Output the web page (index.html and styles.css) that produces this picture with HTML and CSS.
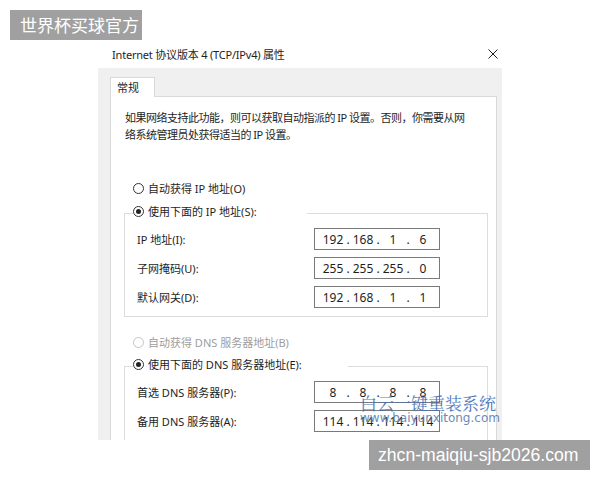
FILE: index.html
```html
<!DOCTYPE html>
<html lang="zh-CN">
<head>
    <meta charset="UTF-8">
    <meta name="viewport" content="width=device-width, initial-scale=1.0">
    <title>Internet 协议版本 4 (TCP/IPv4) 属性</title>
    <link rel="stylesheet" href="styles.css">
</head>
<body>
    <div class="tag tag-top">世界杯买球官方</div>

    <div class="dialog">
        <div class="titlebar">
            <span class="title">Internet 协议版本 4 (TCP/IPv4) 属性</span>
            <svg class="close" width="10" height="10" viewBox="0 0 10 10">
                <path d="M0.5 0.5 L9.5 9.5 M9.5 0.5 L0.5 9.5" stroke="#222" stroke-width="1" fill="none"/>
            </svg>
        </div>

        <div class="frame">
            <div class="tabs">
                <div class="tab">常规</div>
            </div>

            <div class="panel">
                <p class="intro">如果网络支持此功能，则可以获取自动指派的 IP 设置。否则，你需要从网<br>络系统管理员处获得适当的 IP 设置。</p>

                <div class="option"><span class="radio"></span>自动获得 IP 地址(O)</div>

                <div class="group">
                    <div class="option group-head ip-head"><span class="radio checked"></span>使用下面的 IP 地址(S):</div>
                    <div class="fields">
                        <label>IP 地址(I):</label>
                        <div class="ipbox"><span>192</span><i>.</i><span>168</span><i>.</i><span>1</span><i>.</i><span>6</span></div>
                        <label>子网掩码(U):</label>
                        <div class="ipbox"><span>255</span><i>.</i><span>255</span><i>.</i><span>255</span><i>.</i><span>0</span></div>
                        <label>默认网关(D):</label>
                        <div class="ipbox"><span>192</span><i>.</i><span>168</span><i>.</i><span>1</span><i>.</i><span>1</span></div>
                    </div>
                </div>

                <div class="option option-dns disabled"><span class="radio"></span>自动获得 DNS 服务器地址(B)</div>

                <div class="group group-dns">
                    <div class="option group-head dns-head"><span class="radio checked"></span>使用下面的 DNS 服务器地址(E):</div>
                    <div class="fields">
                        <label>首选 DNS 服务器(P):</label>
                        <div class="ipbox"><span>8</span><i>.</i><span>8</span><i>.</i><span>8</span><i>.</i><span>8</span></div>
                        <label>备用 DNS 服务器(A):</label>
                        <div class="ipbox"><span>114</span><i>.</i><span>114</span><i>.</i><span>114</span><i>.</i><span>114</span></div>
                    </div>
                </div>
            </div>

            <!-- site watermark over the screenshot -->
            <div class="mark">
                <div class="mark-cn">白云一键重装系统</div>
                <div class="mark-url">www.baiyunxitong.com</div>
            </div>
        </div>
    </div>

    <div class="tag tag-bottom">zhcn-maiqiu-sjb2026.com</div>
</body>
</html>
```
FILE: styles.css
```css
body {
    margin: 0;
    background-color: #fff;
    font-family: "Noto Sans", "Noto Sans CJK SC", sans-serif;
    font-size: 11px;
    color: #1e1e1e;
    overflow: hidden;
}

/* grey labels on the picture */
.tag {
    height: 30px;
    line-height: 30px;
    background-color: #a0a0a0;
    color: #fff;
    white-space: nowrap;
    box-sizing: border-box;
}
.tag-top {
    margin: 10px 0 0 10px;
    width: 132px;
    padding-left: 10px;
    font-family: "Noto Sans CJK SC", sans-serif;
    font-size: 17px;
}
.tag-bottom {
    margin-left: 369px;
    width: 221px;
    padding-left: 9px;
    font-family: "Liberation Sans", sans-serif;
    font-size: 17.6px;
}

/* the dialog screenshot */
.dialog {
    margin-left: 98px;
    width: 404px;
    height: 400px;
    overflow: hidden;
}
.titlebar {
    height: 28px;
    display: flex;
    justify-content: space-between;
    align-items: center;
    padding: 0 4px 0 14px;
    background-color: #fff;
}
.title {
    letter-spacing: -0.2px;
}
.close {
    display: block;
}
.frame {
    position: relative;
    height: 372px;
    background-color: #f0f0f0;
    padding: 9px 5px 0 12px;
}
.tabs {
    display: flex;
}
.tab {
    position: relative;
    z-index: 1;
    width: 45px;
    height: 20px;
    line-height: 19px;
    box-sizing: border-box;
    padding-left: 6px;
    margin-bottom: -1px;
    border: 1px solid #d9d9d9;
    border-bottom: none;
    background-color: #fff;
}
.panel {
    height: 360px;
    border: 1px solid #d9d9d9;
    background-color: #fff;
    padding: 12px 0 0 13px;
}
.intro {
    margin: 0;
    padding-left: 1px;
    line-height: 17px;
    letter-spacing: -0.5px;
    white-space: nowrap;
}

/* radio rows */
.option {
    display: flex;
    align-items: center;
    height: 20px;
    margin-left: 9px;
    white-space: nowrap;
}
.intro + .option {
    margin-top: 35px;
}
.option-dns {
    margin-top: 15px;
}
.radio {
    width: 11px;
    height: 11px;
    box-sizing: border-box;
    border: 1px solid #333;
    border-radius: 50%;
    margin-right: 4px;
    display: flex;
    align-items: center;
    justify-content: center;
    background-color: #fff;
}
.radio.checked::after {
    content: "";
    width: 5px;
    height: 5px;
    border-radius: 50%;
    background-color: #222;
}
.disabled {
    color: #9d9d9d;
}
.disabled .radio {
    border-color: #c4c4c4;
}

/* group boxes */
.group {
    width: 364px;
    box-sizing: border-box;
    margin-top: 15px;
    border: 1px solid #dcdcdc;
    padding: 0 0 8px 12px;
}
.group-dns {
    margin-top: 14px;
}
.group-head {
    margin: -13px 0 0 -4px;
    background-color: #fff;
    box-sizing: border-box;
}
.ip-head {
    width: 174px;
}
.dns-head {
    width: 215px;
}
.fields {
    display: grid;
    grid-template-columns: 177px 126px;
    grid-auto-rows: 22px;
    row-gap: 7px;
    align-items: center;
    margin-top: 7px;
}
.ipbox {
    height: 22px;
    box-sizing: border-box;
    border: 1px solid #7a7a7a;
    padding-left: 6px;
    display: flex;
    align-items: center;
    font-size: 12px;
}
.ipbox span {
    width: 24px;
    text-align: center;
}
.ipbox i {
    width: 6px;
    text-align: center;
    font-style: normal;
}

.mark {
    position: absolute;
    left: 262px;
    top: 326px;
    opacity: 0.9;
}
.mark-cn {
    font-family: "Noto Serif CJK SC", "Noto Sans CJK SC", serif;
    font-size: 17px;
    line-height: 18px;
    color: #3c6cb4;
    white-space: nowrap;
}
.mark-url {
    font-family: "DejaVu Sans", sans-serif;
    font-size: 12px;
    line-height: 13px;
    color: #5a7db0;
    white-space: nowrap;
}
```
